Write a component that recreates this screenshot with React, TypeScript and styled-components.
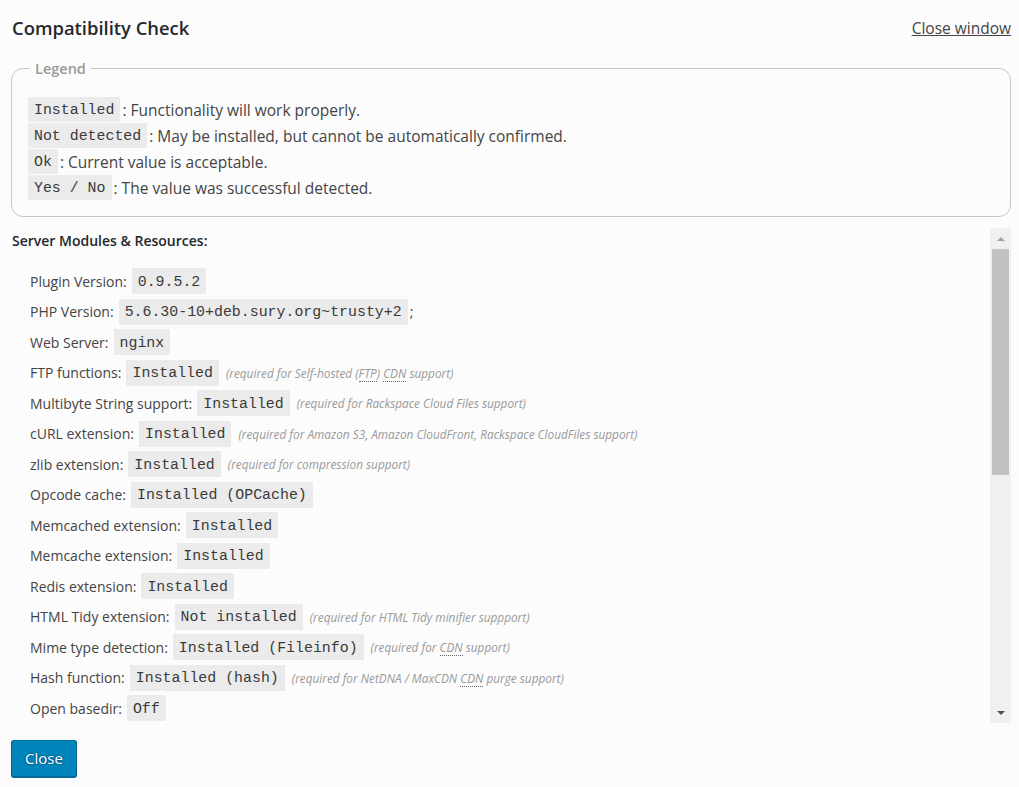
import React, { FC } from 'react'
import styled, { createGlobalStyle } from 'styled-components'

const GlobalStyle = createGlobalStyle`
  html, body {
    margin: 0;
    padding: 0;
    background: #fcfcfc;
  }
  body {
    font-family: 'Open Sans', 'Noto Sans', sans-serif;
    font-size: 14px;
    color: #444;
  }
`

const Page = styled.div`
  width: 1019px;
  height: 787px;
  box-sizing: border-box;
  padding: 0 8px 0 11px;
  display: flex;
  flex-direction: column;
`

const Header = styled.div`
  display: flex;
  justify-content: space-between;
  align-items: center;
  height: 55px;
  flex-shrink: 0;
  padding-left: 1px;
`

const Title = styled.h1`
  margin: 0;
  font-size: 18.4px;
  font-weight: 600;
  color: #23282d;
`

const CloseLink = styled.a`
  font-size: 15.5px;
  color: #444;
  text-decoration: underline;
`

const Legend = styled.fieldset`
  flex-shrink: 0;
  margin: 4px 0 0;
  padding: 19px 16px 16px 16px;
  border: 1px solid #c8c8c8;
  border-radius: 12px;
  display: flex;
  flex-direction: column;
  gap: 1px;
`

const LegendTitle = styled.legend`
  padding: 0 5px;
  margin-left: 2px;
  color: #999;
  font-weight: 600;
  font-size: 14.5px;
`

const LegendRow = styled.div`
  display: flex;
  align-items: center;
  height: 25px;
  gap: 2px;
  font-size: 15.5px;
`

const Code = styled.code<{ $tall?: boolean }>`
  display: inline-flex;
  align-items: center;
  height: ${(p) => (p.$tall ? '26px' : '25px')};
  padding: 1px 6px 0;
  box-sizing: border-box;
  background: #ebebeb;
  color: #3a3a3a;
  font-family: 'Liberation Mono', 'DejaVu Sans Mono', monospace;
  font-size: 14.9px;
`

const ScrollArea = styled.div`
  flex-shrink: 0;
  margin-top: 11px;
  height: 495px;
  display: flex;
`

const ScrollContent = styled.div`
  flex: 1;
  overflow: hidden;
  padding-left: 1px;
`

const Track = styled.div`
  width: 21px;
  background: #f0f0f0;
  display: flex;
  flex-direction: column;
`

const ArrowButton = styled.div<{ $down?: boolean }>`
  height: 21px;
  display: flex;
  align-items: center;
  justify-content: center;

  &::after {
    content: '';
    border-left: 4px solid transparent;
    border-right: 4px solid transparent;
    ${(p) =>
      p.$down
        ? 'border-top: 4px solid #505050;'
        : 'border-bottom: 4px solid #a3a3a3;'}
  }
`

const Thumb = styled.div`
  height: 226px;
  margin: 0 2px;
  background: #c1c1c1;
`

const TrackSpace = styled.div`
  flex: 1;
`

const SectionTitle = styled.h3`
  margin: 3px 0 0;
  font-size: 14px;
  font-weight: 600;
  color: #23282d;
`

const List = styled.ul`
  list-style: none;
  margin: 18px 0 20px;
  padding: 0 0 0 18px;
  display: flex;
  flex-direction: column;
  gap: 4.5px;
`

const Item = styled.li`
  display: flex;
  align-items: center;
  min-height: 26px;
  gap: 5px;
`

const Note = styled.span`
  margin-left: 2px;
  font-size: 11.8px;
  font-style: italic;
  color: #999;
`

const Abbr = styled.abbr`
  text-decoration: none;
  border-bottom: 1px dotted #666;
`

const Footer = styled.div`
  flex-shrink: 0;
  padding-top: 17px;
`

const Button = styled.button`
  height: 37px;
  padding: 0 13px 2px;
  background: #0085ba;
  border: 1px solid #0073aa;
  border-color: #0073aa #006799 #006799;
  border-radius: 3px;
  box-shadow: 0 1px 0 #006799;
  color: #fff;
  font-family: 'Open Sans', 'Noto Sans', sans-serif;
  font-size: 15px;
  text-shadow: 0 -1px 1px #006799, 1px 0 1px #006799, 0 1px 1px #006799, -1px 0 1px #006799;
`

type Row = { label: string; value: string; note?: React.ReactNode; after?: string }

const cdn = <Abbr title="Content Delivery Network">CDN</Abbr>

const rows: Row[] = [
  { label: 'Plugin Version:', value: '0.9.5.2' },
  { label: 'PHP Version:', value: '5.6.30-10+deb.sury.org~trusty+2', after: ';' },
  { label: 'Web Server:', value: 'nginx' },
  {
    label: 'FTP functions:',
    value: 'Installed',
    note: (
      <>
        (required for Self-hosted (<Abbr title="File Transfer Protocol">FTP</Abbr>) {cdn} support)
      </>
    ),
  },
  { label: 'Multibyte String support:', value: 'Installed', note: '(required for Rackspace Cloud Files support)' },
  { label: 'cURL extension:', value: 'Installed', note: '(required for Amazon S3, Amazon CloudFront, Rackspace CloudFiles support)' },
  { label: 'zlib extension:', value: 'Installed', note: '(required for compression support)' },
  { label: 'Opcode cache:', value: 'Installed (OPCache)' },
  { label: 'Memcached extension:', value: 'Installed' },
  { label: 'Memcache extension:', value: 'Installed' },
  { label: 'Redis extension:', value: 'Installed' },
  { label: 'HTML Tidy extension:', value: 'Not installed', note: '(required for HTML Tidy minifier suppport)' },
  { label: 'Mime type detection:', value: 'Installed (Fileinfo)', note: <>(required for {cdn} support)</> },
  { label: 'Hash function:', value: 'Installed (hash)', note: <>(required for NetDNA / MaxCDN {cdn} purge support)</> },
  { label: 'Open basedir:', value: 'Off' },
  { label: 'zlib output compression:', value: 'Off' },
  { label: 'set_time_limit:', value: 'Available' },
  { label: 'SSH2 functions:', value: 'Installed' },
  { label: 'mod_deflate / mod_gzip:', value: 'Not detected' },
  { label: 'mod_mime:', value: 'Not detected' },
]

const legend = [
  ['Installed', 'Functionality will work properly.'],
  ['Not detected', 'May be installed, but cannot be automatically confirmed.'],
  ['Ok', 'Current value is acceptable.'],
  ['Yes / No', 'The value was successful detected.'],
]

const App: FC = () => {
  return (
    <Page>
      <GlobalStyle />
      <Header>
        <Title>Compatibility Check</Title>
        <CloseLink href="#">Close window</CloseLink>
      </Header>

      <Legend>
        <LegendTitle>Legend</LegendTitle>
        {legend.map(([code, text]) => (
          <LegendRow key={code}>
            <Code>{code}</Code>
            <span>: {text}</span>
          </LegendRow>
        ))}
      </Legend>

      <ScrollArea>
        <ScrollContent>
          <SectionTitle>Server Modules &amp; Resources:</SectionTitle>
          <List>
            {rows.map(({ label, value, note, after }) => (
              <Item key={label}>
                <span>{label}</span>
                <Code $tall>{value}</Code>
                {after && <span style={{ marginLeft: -3 }}>{after}</span>}
                {note && <Note>{note}</Note>}
              </Item>
            ))}
          </List>
        </ScrollContent>
        <Track>
          <ArrowButton />
          <Thumb />
          <TrackSpace />
          <ArrowButton $down />
        </Track>
      </ScrollArea>

      <Footer>
        <Button>Close</Button>
      </Footer>
    </Page>
  )
}

export default App
